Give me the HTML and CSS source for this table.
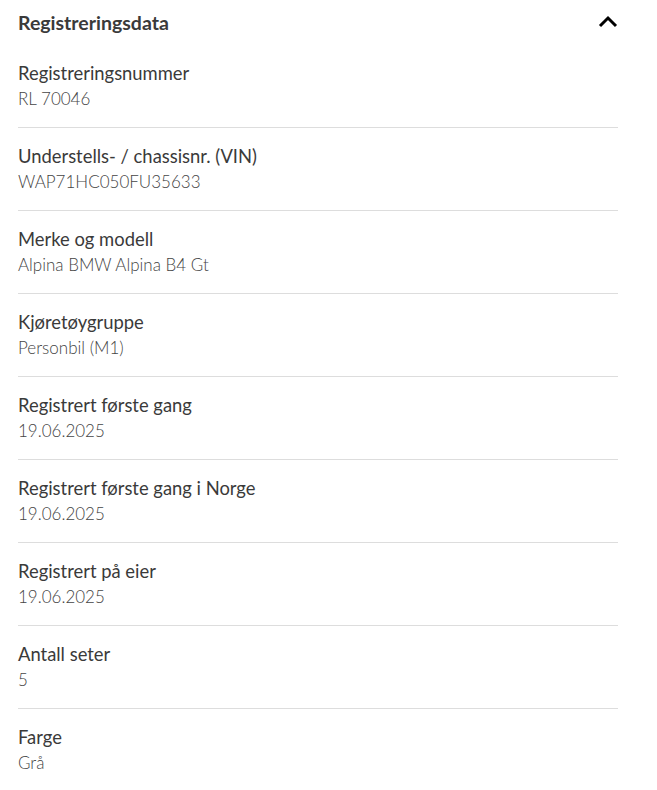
FILE: index.html
```html
<!DOCTYPE html>
<html lang="no">
<head>
<meta charset="utf-8">
<link rel="stylesheet" href="styles.css">
</head>
<body>
<section class="panel">
  <header class="panel-head">
    <h2 class="panel-title">Registreringsdata</h2>
    <svg class="chev" width="20" height="14" viewBox="0 0 20 14"><path d="M2 11 L10 3 L18 11" fill="none" stroke="#000" stroke-width="3"/></svg>
  </header>
  <dl class="list">
    <div class="row"><dt>Registreringsnummer</dt><dd>RL 70046</dd></div>
    <div class="row"><dt>Understells- / chassisnr. (VIN)</dt><dd>WAP71HC050FU35633</dd></div>
    <div class="row"><dt>Merke og modell</dt><dd>Alpina BMW Alpina B4 Gt</dd></div>
    <div class="row"><dt>Kjøretøygruppe</dt><dd>Personbil (M1)</dd></div>
    <div class="row"><dt>Registrert første gang</dt><dd>19.06.2025</dd></div>
    <div class="row"><dt>Registrert første gang i Norge</dt><dd>19.06.2025</dd></div>
    <div class="row"><dt>Registrert på eier</dt><dd>19.06.2025</dd></div>
    <div class="row"><dt>Antall seter</dt><dd>5</dd></div>
    <div class="row"><dt>Farge</dt><dd>Grå</dd></div>
  </dl>
</section>
</body>
</html>
```
FILE: styles.css
```css
html, body { margin: 0; padding: 0; background: #fff; }
body { font-family: Lato, "Liberation Sans", sans-serif; color: #333; }
.panel { padding: 0 39px 0 18px; }
.panel-head { display: flex; align-items: center; justify-content: space-between; height: 44px; }
.panel-title { margin: 0; font-size: 19.5px; font-weight: 700; color: #3a3a3a; }
.list { margin: 0; padding-top: 1px; }
.row { padding: 15px 0; border-bottom: 1px solid #ddd; }
.row:last-child { border-bottom: none; }
dt { font-size: 18.4px; line-height: 26px; color: #3a3a3a; }
dd { margin: 0; font-size: 17px; line-height: 26px; font-weight: 300; color: #444; }
```
